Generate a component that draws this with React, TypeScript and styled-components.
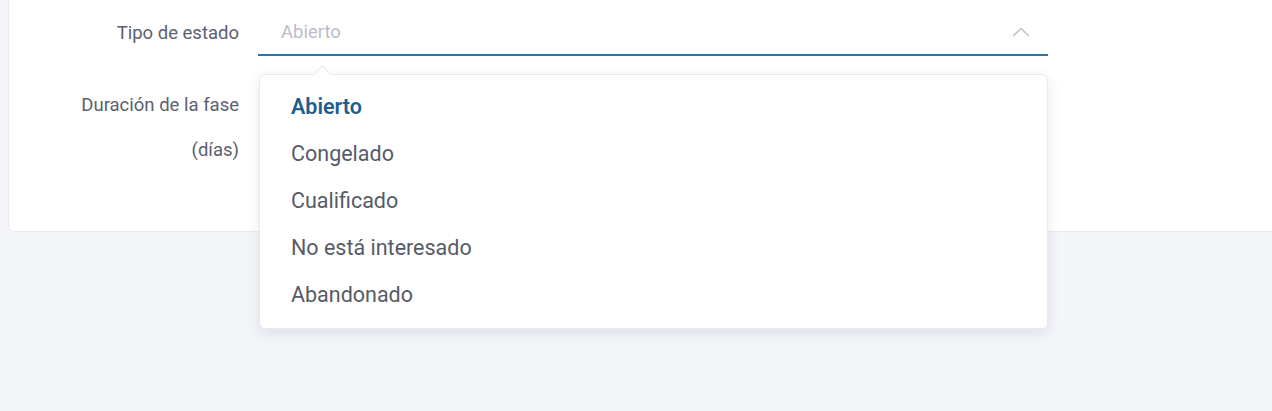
import * as React from "react";
import styled, { createGlobalStyle } from "styled-components";

const GlobalStyle = createGlobalStyle`
    html, body {
        margin: 0;
        padding: 0;
        background: #f4f5f9;
        font-family: Roboto, "Noto Sans", Arial, sans-serif;
        overflow: hidden;
    }
`;

const Page = styled.div`
    width: 1272px;
    height: 411px;
    padding-left: 8px;
    box-sizing: border-box;
`;

const Card = styled.div`
    background: #fff;
    border: 1px solid #e9ebf2;
    border-top: none;
    border-radius: 0 0 6px 6px;
    margin-right: -20px;
    padding: 10px 0 58px 0;
    display: grid;
    grid-template-columns: 230px 790px;
    column-gap: 19px;
    row-gap: 27px;
    align-items: start;
`;

const Label = styled.label<{ lh: number }>`
    text-align: right;
    font-size: 18.5px;
    color: #5b6070;
    line-height: ${p => p.lh}px;
    white-space: nowrap;
`;

const FieldWrap = styled.div`
    position: relative;
`;

const Field = styled.div<{ open?: boolean }>`
    height: 44px;
    border-bottom: 2px solid ${p => (p.open ? "#3573a3" : "#dfe2ea")};
    display: flex;
    align-items: center;
    justify-content: space-between;
    padding: 0 18px 0 23px;
`;

const Placeholder = styled.span`
    font-size: 18.5px;
    color: #b9bdca;
`;

const Chevron = styled.svg`
    width: 18px;
    height: 10px;
    margin-top: -1px;
`;

const Menu = styled.ul`
    position: absolute;
    top: 64px;
    left: 1px;
    width: 789px;
    box-sizing: border-box;
    margin: 0;
    padding: 8px 0 10px;
    list-style: none;
    background: #fff;
    border: 1px solid #e8eaf1;
    border-radius: 6px;
    box-shadow: 0 4px 14px rgba(30, 40, 80, 0.1);
    z-index: 2;
    &::before {
        content: "";
        position: absolute;
        top: -7px;
        left: 56px;
        width: 12px;
        height: 12px;
        background: #fff;
        border-left: 1px solid #e8eaf1;
        border-top: 1px solid #e8eaf1;
        transform: rotate(45deg);
    }
`;

const Item = styled.li<{ selected?: boolean }>`
    position: relative;
    padding-left: 31px;
    line-height: 47px;
    font-size: 21.5px;
    font-weight: ${p => (p.selected ? 600 : 400)};
    color: ${p => (p.selected ? "#1f5c8f" : "#565b68")};
`;

const options = ["Abierto", "Congelado", "Cualificado", "No está interesado", "Abandonado"];

const App = () => {
    return (
        <Page>
            <GlobalStyle />
            <Card>
                <Label lh={46}>Tipo de estado</Label>
                <FieldWrap>
                    <Field open>
                        <Placeholder>Abierto</Placeholder>
                        <Chevron viewBox="0 0 18 10" fill="none">
                            <path d="M1.5 8.5 L9 1.5 L16.5 8.5" stroke="#bcc0cd" strokeWidth="1.6" strokeLinecap="round" strokeLinejoin="round" />
                        </Chevron>
                    </Field>
                    <Menu>
                        {options.map((o, i) => (
                            <Item key={o} selected={i === 0}>{o}</Item>
                        ))}
                    </Menu>
                </FieldWrap>
                <Label lh={45}>Duración de la fase<br />(días)</Label>
                <FieldWrap>
                    <Field>
                        <Placeholder></Placeholder>
                    </Field>
                </FieldWrap>
            </Card>
        </Page>
    );
};

export default App;
